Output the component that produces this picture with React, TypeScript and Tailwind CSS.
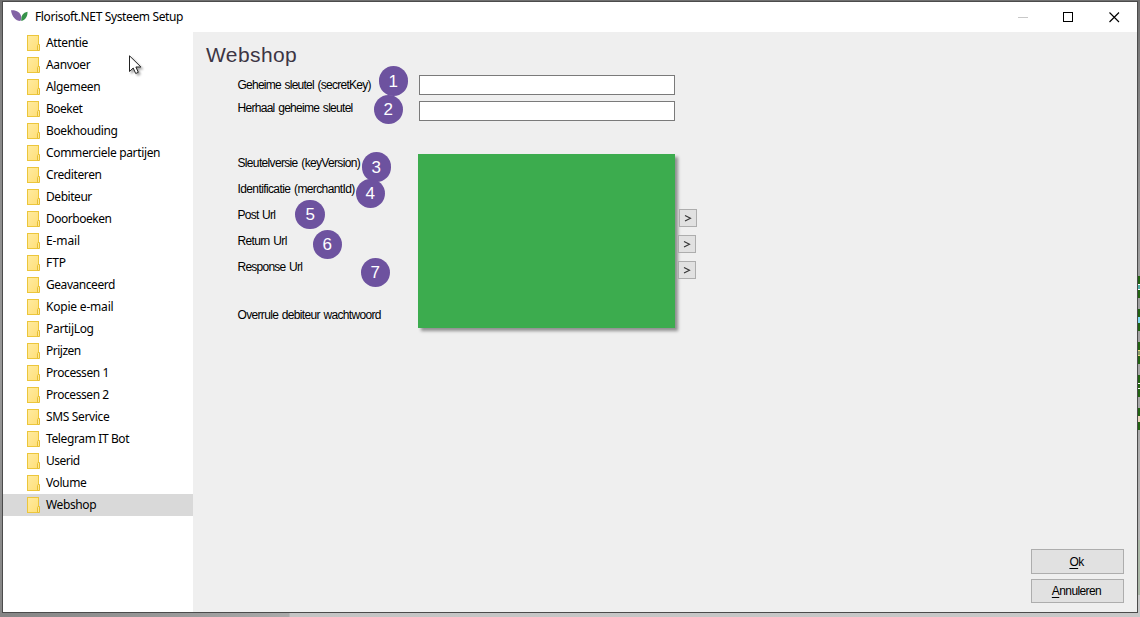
import React from "react";

const folders: [string, string][] = [
  ["Attentie", "tracking-[-0.35px]"],
  ["Aanvoer", "tracking-[-0.38px]"],
  ["Algemeen", "tracking-[-0.35px]"],
  ["Boeket", "tracking-[-0.5px]"],
  ["Boekhouding", "tracking-[-0.38px]"],
  ["Commerciele partijen", "tracking-[-0.35px]"],
  ["Crediteren", "tracking-[-0.4px]"],
  ["Debiteur", "tracking-[-0.45px]"],
  ["Doorboeken", "tracking-[-0.48px]"],
  ["E-mail", "tracking-[-0.1px]"],
  ["FTP", "tracking-[-0.1px]"],
  ["Geavanceerd", "tracking-[-0.45px]"],
  ["Kopie e-mail", "tracking-[-0.2px]"],
  ["PartijLog", "tracking-[-0.3px]"],
  ["Prijzen", "tracking-[-0.5px]"],
  ["Processen 1", "tracking-[-0.4px]"],
  ["Processen 2", "tracking-[-0.42px]"],
  ["SMS Service", "tracking-[-0.35px]"],
  ["Telegram IT Bot", "tracking-[-0.38px]"],
  ["Userid", "tracking-[-0.5px]"],
  ["Volume", "tracking-[-0.4px]"],
  ["Webshop", "tracking-[-0.38px]"],
];

const labels: [string, string][] = [
  ["Geheime sleutel (secretKey)", "mt-2 tracking-[-0.75px]"],
  ["Herhaal geheime sleutel", "mt-[7px] tracking-[-0.71px]"],
  ["Sleutelversie (keyVersion)", "mt-[39px] tracking-[-0.66px]"],
  ["Identificatie (merchantId)", "mt-[10px] tracking-[-0.61px]"],
  ["Post Url", "mt-[10px] tracking-[-0.75px]"],
  ["Return Url", "mt-[10px] tracking-[-0.65px]"],
  ["Response Url", "mt-[10px] tracking-[-0.75px]"],
  ["Overrule debiteur wachtwoord", "mt-[32px] tracking-[-0.67px]"],
];

const badges: [number, string][] = [
  [1, "left-[378.5px] top-[66.300px]"],
  [2, "left-[373.5px] top-[94.500px]"],
  [3, "left-[361.5px] top-[152.300px]"],
  [4, "left-[355.5px] top-[178.500px]"],
  [5, "left-[295.4px] top-[199.500px]"],
  [6, "left-[312.5px] top-[229.500px]"],
  [7, "left-[360.5px] top-[257.500px]"],
];

function FolderIcon() {
  return (
    <svg width="13" height="16" viewBox="0 0 13 16" className="shrink-0">
      <defs>
        <linearGradient id="folder" x1="0" y1="0" x2="1" y2="1">
          <stop offset="0" stopColor="#ffebA0" />
          <stop offset="1" stopColor="#ffdf78" />
        </linearGradient>
      </defs>
      <rect x="0.5" y="0.5" width="11" height="15" fill="url(#folder)" stroke="#ecc63b" />
      <path d="M10.5 15.500v-5l.5-1h1.500v6z" fill="#ffe796" stroke="#e6bf33" />
    </svg>
  );
}

function Logo() {
  return (
    <svg width="18" height="12" viewBox="0 0 18 12" className="mb-[2px]">
      <path d="M0 .2C5-.3 9.500 2 10.200 6.500c.2 1.800-.2 3.300-.8 4.500C4.500 10.800 1 7 0 .2z" fill="#8262a5" />
      <path d="M16.500 1.700c.2 4-1.800 8.200-6.200 9.300C9.800 6 12 2.500 16.500 1.700z" fill="#36924a" />
    </svg>
  );
}

function Cursor() {
  return (
    <svg width="20" height="24" viewBox="0 0 20 24" className="absolute left-[129px] top-[55px] drop-shadow-[2px_2px_1px_rgba(0,0,0,0.35)]">
      <path d="M.5.800v15.700l3.700-3.500 2.500 5.500 2.600-1.200-2.400-5.300h5z" fill="#fff" stroke="#222" />
    </svg>
  );
}

function Arrow({ className }: { className: string }) {
  return (
    <button className={"flex h-[18px] w-[18px] items-center justify-center border border-[#adadad] bg-[#e1e1e1] " + className}>
      <svg width="8" height="8" viewBox="0 0 8 8">
        <path d="M1 1.500l5.500 2.800L1 7" fill="none" stroke="#333" strokeWidth="1.100" />
      </svg>
    </button>
  );
}

export default function App() {
  return (
    <div className="relative flex h-[617px] w-[1140px] overflow-hidden bg-[linear-gradient(90deg,#858585_0,#999_170px,#aaa_289px,#c4c4c4_290px,#c8c8c8_100%)] pt-px pl-0.5 font-['Liberation_Sans',sans-serif] text-black">
      <div className="absolute inset-x-0 top-0 h-px bg-[#707070]" />
      <div className="absolute top-0 left-0 h-[617px] w-0.5 bg-[linear-gradient(#6e6e6e,#858585_10%,#999_60%,#858585)]" />
      <div className="absolute top-0 right-0 h-[540px] w-[2px] bg-[linear-gradient(#707070,#999_40%,#b4b4b4)]" />
      <div className="absolute top-[276px] right-0 flex w-[2px] flex-col gap-[11px]">
        <div className="flex h-[22px] items-center bg-[#226312]"><i className="h-[6px] w-[2px] border-y border-white bg-[#4bb0a5]" /></div>
        <div className="flex h-[22px] items-center bg-[#226312]"><i className="h-[6px] w-[2px] bg-[#7fdcf5]" /></div>
        <div className="flex h-[22px] items-center bg-[#226312]"><i className="h-[6px] w-[2px] border-y border-[#eedd86] bg-[#8aa06a]" /></div>
        <div className="flex h-[22px] items-center bg-[#226312]"><i className="h-[6px] w-[2px] border-y border-white" /></div>
        <div className="flex h-[22px] items-center bg-[#226312]"><i className="h-[6px] w-[2px] bg-[#e9d5bd]" /></div>
      </div>
      <div className="absolute top-[540px] right-0 h-[55px] w-[2px] bg-[#a9b6a5]" />

      <div className="relative flex h-[612px] w-[1136px] flex-col border border-[#4b4b4b] bg-[#efefef]">
        <header className="flex h-[30px] shrink-0 items-center bg-white pl-2">
          <Logo />
          <h1 className="ml-[6px] font-['Noto_Sans',sans-serif] text-[12px] tracking-[-0.37px]">Florisoft.NET Systeem Setup</h1>
          <svg width="103" height="12" viewBox="0 0 103 12" className="mr-[16px] mb-px ml-auto" fill="none">
            <path d="M0 6.500h10" stroke="#c8c8c8" />
            <rect x="45.500" y="1.500" width="9" height="9" stroke="#000" />
            <path d="M91.500 1.500l9.500 9.500M101 1.500l-9.500 9.500" stroke="#000" strokeWidth="1.150" />
          </svg>
        </header>
        <div className="flex min-h-0 flex-1">
          <nav className="w-[190px] shrink-0 bg-white font-['Noto_Sans',sans-serif] text-[12px]">
            {folders.map(([name, tracking]) => (
              <div key={name} className={"flex h-[22px] items-center gap-[6px] pl-6 " + (name === "Webshop" ? "bg-[#d9d9d9]" : "")}>
                <FolderIcon />
                <span className={"whitespace-nowrap " + tracking}>{name}</span>
              </div>
            ))}
          </nav>
          <main className="flex flex-1 flex-col">
            <h2 className="mt-[11px] ml-[13px] h-[24px] text-[21px] leading-[24px] tracking-[0.4px] text-[#3c3544]">Webshop</h2>
            <div className="flex pl-[44px]">
              <div className="mt-[2px] flex w-[181px] flex-col pl-[0.5px] text-[12px] leading-4 whitespace-nowrap [word-spacing:1px]">
                {labels.map(([text, cls]) => (
                  <span key={text} className={cls}>{text}</span>
                ))}
              </div>
              <div className="flex flex-col pt-2">
                <input className="ml-px h-5 w-64 border border-[#7a7a7a] bg-white outline-none" />
                <input className="mt-[6px] ml-px h-5 w-64 border border-[#7a7a7a] bg-white outline-none" />
                <div className="mt-[33px] h-[174px] w-[257px] bg-[#3cac4e] shadow-[3px_3px_3px_rgba(0,0,0,0.4)]" />
              </div>
              <div className="flex flex-col pt-[142px]">
                <Arrow className="ml-[4px]" />
                <Arrow className="mt-2 ml-[3px]" />
                <Arrow className="mt-2 ml-[3px]" />
              </div>
            </div>
            <div className="mt-auto mr-[13px] mb-[9px] flex flex-col gap-[5px] self-end text-[12px] tracking-[-0.6px]">
              <button className="h-[25px] w-[93px] border border-[#adadad] bg-[#e1e1e1] pr-[2px]"><u className="underline-offset-2">O</u>k</button>
              <button className="h-6 w-[93px] border border-[#adadad] bg-[#e1e1e1] pr-[2px]"><u className="underline-offset-2">A</u>nnuleren</button>
            </div>
          </main>
        </div>
      </div>

      {badges.map(([n, position]) => (
        <div key={n} className={"absolute flex size-[29.5px] items-center justify-center rounded-full bg-[#6d529f] text-[17px] leading-none text-white " + position}>{n}</div>
      ))}
      <Cursor />
    </div>
  );
}
